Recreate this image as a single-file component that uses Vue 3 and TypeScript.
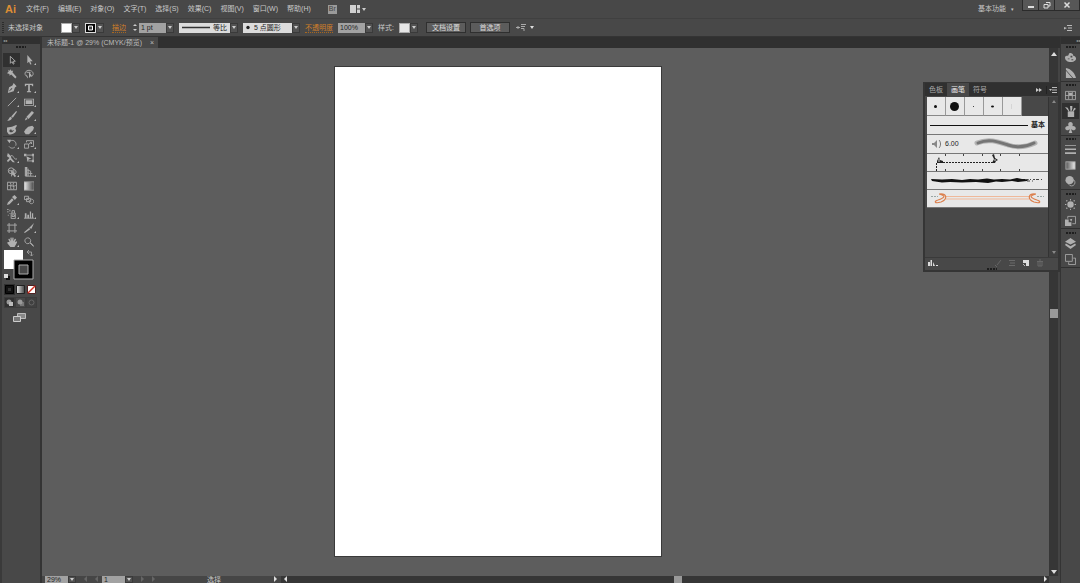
<script setup lang="ts">
import { ref } from 'vue'

interface Icon {
  name: string
  f?: string
  s?: string
  sub?: boolean
}

const menus: string[] = ['文件(F)', '编辑(E)', '对象(O)', '文字(T)', '选择(S)', '效果(C)', '视图(V)', '窗口(W)', '帮助(H)']

const tools: Icon[] = [
  { name: '选择', s: 'M4 1.500V10L6 8L7.500 11L8.500 10.500L7.500 7.500H10Z' },
  { name: '直接选择', f: 'M4 0V10L6 8L7.500 11.500L9 11L7.500 7.500H10.500Z', sub: true },
  { name: '魔棒', f: 'M4 0L5 2L7.500 2L6.500 4L11.500 9.500L10 11.500L5 6.500L3 8L3 6L0 5L2 3L1.500 1L3.500 2Z' },
  { name: '套索', s: 'M4 9C0 8 0 2 6 1.500C12 2 12 8 9 8.500M3 4H8M3 7C3 9 5 9 4 11', f: 'M6 3V11L7.500 9L10 9Z' },
  { name: '钢笔', f: 'M8 0L11.500 4L9.500 5.500L8 10L1 12L2.500 5L6.500 3ZM3 10L6.500 7L5.500 6L2.500 9.500Z', sub: true },
  { name: '文字', f: 'M1 1H11V4H10L9 2.500H7V9.500L8.500 10V11H3.500V10L5 9.500V2.500H3L2 4H1Z', sub: true },
  { name: '直线段', s: 'M1 11L11 1', sub: true },
  { name: '矩形', f: 'M0 2H12V10.500H0ZM1 3V9.500H11V3Z M2 4H10V8.500H2Z', sub: true },
  { name: '画笔', f: 'M11 0L12 1L7 8L5 6.500ZM4.500 7L6 8.500C5 11 3 12 0 11.500C2.500 10.500 2 8 4.500 7Z' },
  { name: '铅笔', f: 'M9.500 0L12 2L5.500 9.500L3 7ZM2.500 7.500L4.500 9.500L1 11.500Z', sub: true },
  { name: '斑点画笔', f: 'M0 3L6 2L11 0L12 1L10 4L11 7C10 10 6 12 2 11L0 8ZM3 6L3 8C5 10 8 8 8.500 6L6 7L5 5Z' },
  { name: '橡皮擦', f: 'M5 2L10 1L12 3L11 6L6 11L2 11L0 8L2 5Z', sub: true },
  { name: '旋转', s: 'M4 2.500C8 0 12 4 10.500 8M9.500 9.500C7 12 4 11 2.500 9', f: 'M0 1L5 1L3 5Z', sub: true },
  { name: '比例缩放', s: 'M.500 6H5.500V11H.500ZM3 4V2H11.500V9H8M6 6L9 4M7 4H9V6', sub: true },
  { name: '宽度', f: 'M1 0L5 4L5 6L9.500 11L7 11L4 8L1 11L0 9L3 6L0 4Z', s: 'M5 3C8 2 8 9 12 7', sub: true },
  { name: '自由变换', s: 'M3 2.500H11V9.500H3.500', f: 'M0 1H3V4H0ZM3 4L9 7L6 7.500L4 10ZM9.500 1H12V4H9.500ZM9.500 8H12V11H9.500Z' },
  { name: '形状生成器', s: 'M5 1A3.500 3.500 0 1 0 5 8A3.500 3.500 0 1 0 5 1M2 4.500H8M7 3A3 3 0 0 1 10 8', f: 'M5 4V12L7 9L9 12L11 11L9 8H11Z', sub: true },
  { name: '透视网格', s: 'M2 0V11H12M5 2V11M2 3L8 5M2 7L10 8M8 5V11', f: 'M1 0H4V11H1Z', sub: true },
  { name: '网格', s: 'M.500 1.500H11.500V10.500H.500ZM1 6C4 4 8 8 11 5M4 2C6 5 3 7 5 10M8 2C6 5 9 7 8 10' },
  { name: '渐变', f: '' },
  { name: '吸管', f: 'M9 0L12 3L9.500 6L6 2.500ZM6 4L8 6L3 11L0 12L1 9Z', sub: true },
  { name: '混合', s: 'M.500 1.500H5.500V5.500H.500ZM3 4H8V8H3ZM9 5A2.700 2.700 0 1 1 8.900 5' },
  { name: '符号喷枪', s: 'M5 5H10V11.500H5ZM6 5V2H9V5M6 7H9V9H6Z', f: 'M0 0H2V1H0ZM3 1H4V3H3ZM0 3H2V4H0ZM3 5H4V6H3ZM1 7H2V8H1Z', sub: true },
  { name: '柱形图', s: 'M0 11H12', f: 'M1 5H3V11H1ZM4 7H6V11H4ZM7 3H8.500V11H7ZM9.500 5H11V11H9.500Z', sub: true },
  { name: '画板', s: 'M2.500 0V12M9.500 0V12M0 2.500H12M0 9.500H12' },
  { name: '切片', f: 'M12 0L9 7L6 6ZM6 6L7.500 7.500L1 12L0 11Z', sub: true },
  { name: '抓手', f: 'M3 6L1.500 2.500L3 2L4.500 5L4 1L5.500 .500L6 4.500L6.500 .500L8 1L7.500 5L9.500 2L11 2.500L9.500 6L12 5L12 6.500L9 12H4L0 7L1.500 6Z', sub: true },
  { name: '缩放', s: 'M4.500 1A3.500 3.500 0 1 0 4.600 1M7 7L11.500 11.500M7.500 6.500L11.500 10.500' },
]

const dock: Icon[][] = [
  [
    { name: '颜色', f: 'M0 6C0 3 4 5 4 3C4 0 9 1 9 4C12 4 14 9 9 10.500C5 12 0 10 0 6ZM3 7V8H5V7ZM6 4V6H8V4ZM7 8V9H9V8Z' },
    { name: '颜色参考', f: 'M1 0C7 1 11 6 12 11H9L1 2ZM1 3L8 11H1Z' },
  ],
  [
    { name: '色板', s: 'M.500 1.500H11.500V10.500H.500ZM4 2V10M8 2V10M0 6H12', f: 'M4 3H8V6H4Z' },
    { name: '画笔', f: 'M3 6H10V12H3ZM0 1L3 2L5 6H4ZM5.500 0H8V3L7 6H6ZM10 2L12 3L9 6H8Z' },
    { name: '符号', f: 'M6 0C8.500 0 9 3 8 4.500C12 4 13 8 10 9C8 9 7 8 6.500 7.500L8 12H4L5.500 7.500C5 8 4 9 2 9C-1 8 0 4 4 4.500C3 3 3.500 0 6 0Z' },
  ],
  [
    { name: '描边', f: 'M0 1H12V2H0ZM0 5H12V6.500H0ZM0 9H12V11H0Z' },
    { name: '渐变', f: '' },
    { name: '透明度', f: 'M5 0A4.500 4.500 0 1 0 5 9A4.500 4.500 0 0 0 5 0Z', s: 'M8 3.500A3.700 3.700 0 1 1 4 9' },
  ],
  [
    { name: '外观', f: 'M6 2.500A3.500 3.500 0 1 0 6 9.500A3.500 3.500 0 1 0 6 2.500ZM5.500 0H6.500V1.500H5.500ZM5.500 10.500H6.500V12H5.500ZM0 5.500H1.500V6.500H0ZM10.500 5.500H12V6.500H10.500ZM1 2L2 1L3 2L2 3ZM9 2L10 1L11 2L10 3ZM1 10L2 9L3 10L2 11ZM9 10L10 9L11 10L10 11Z' },
    { name: '图形样式', s: 'M3 4V1.500H11.500V9.500H8', f: 'M0 5H4V8H7V12H0ZM5 5L8 4L7 7Z' },
  ],
  [
    { name: '图层', f: 'M6 0L12 4L6 7L0 4ZM1 6L6 9L11 6L12 7.500L6 12L0 7.500Z' },
    { name: '画板', s: 'M.500 .500H8V8H.500ZM4 9V11.500H11.500V4.500H9' },
  ],
]

const brushTips: number[] = [3, 9, 1, 3, 0]
const panelTabs: string[] = ['色板', '画笔', '符号']
const activeTab = ref('画笔')
const activeTool = ref('选择')
const strokeWeight = ref('1 pt')
const opacity = ref('100%')
const zoomLevel = ref('29%')
const artboardNo = ref('1')
</script>

<template>
  <div class="app">
    <svg class="defs" width="0" height="0" aria-hidden="true">
      <defs>
        <linearGradient id="ramp"><stop offset="0" stop-color="#555" /><stop offset="1" stop-color="#eee" /></linearGradient>
        <linearGradient id="ramp-back"><stop offset="0" stop-color="#eee" /><stop offset="1" stop-color="#444" /></linearGradient>
      </defs>
    </svg>

    <header class="menubar">
      <span class="logo">Ai</span>
      <nav class="menus">
        <button v-for="m in menus" :key="m" class="menu">{{ m }}</button>
      </nav>
      <button class="bridge" aria-label="Bridge">Br</button>
      <button class="arrange" aria-label="排列文档">
        <svg width="16" height="9" viewBox="0 0 16 9"><path d="M0 0H6V8H0ZM7 0H10V3.500H7ZM7 4.500H10V8H7Z" fill="#d0d0d0" /><path d="M12 3H16L14 6Z" fill="#ccc" /></svg>
      </button>
      <button class="workspace">基本功能 <span class="tiny">▾</span></button>
      <div class="window-buttons">
        <button aria-label="最小化"><svg width="8" height="8" viewBox="0 0 8 8"><path d="M1 5H7V7H1Z" fill="#ddd" /></svg></button>
        <button aria-label="还原"><svg width="8" height="8" viewBox="0 0 8 8"><path d="M3 1.500H7V5H5M1 3.500H5V7H1Z" fill="none" stroke="#ddd" /></svg></button>
        <button class="close" aria-label="关闭"><svg width="8" height="8" viewBox="0 0 8 8"><path d="M1.500 1.500L6.500 6.500M6.500 1.500L1.500 6.500" stroke="#ddd" stroke-width="1.500" /></svg></button>
      </div>
    </header>

    <section class="controls" aria-label="控制">
      <i class="handle"></i>
      <span class="selection">未选择对象</span>
      <div class="combo"><button class="swatch" aria-label="填色"></button><button class="drop" aria-label="填色选项"></button></div>
      <div class="combo">
        <button class="swatch hollow" aria-label="描边颜色"><svg width="11" height="10" viewBox="0 0 11 10"><path d="M.500 .500H10.500V9.500H.500Z" fill="#050505" stroke="#ddd" /><path d="M3.500 3H7.500V7H3.500Z" fill="#444" stroke="#fff" /></svg></button>
        <button class="drop" aria-label="描边选项"></button>
      </div>
      <label class="hot stroke-label" for="weight">描边</label>
      <div class="combo">
        <button class="stepper" aria-label="增减"><svg width="6" height="9" viewBox="0 0 6 9"><path d="M1 3L3 1L5 3ZM1 6L3 8L5 6Z" fill="#ccc" /></svg></button>
        <input id="weight" v-model="strokeWeight" class="field" />
        <button class="drop" aria-label="粗细"></button>
      </div>
      <div class="combo light">
        <svg width="31" height="9" viewBox="0 0 31 9"><path d="M3 4.500H31" stroke="#333" stroke-width="1.500" /></svg>
        <select class="profile" aria-label="宽度配置文件"><option>等比</option></select><span class="drop"></span>
      </div>
      <div class="combo light">
        <svg width="11" height="9" viewBox="0 0 11 9"><circle cx="5" cy="4.500" r="1.700" fill="#222" /></svg>
        <select class="brush" aria-label="画笔定义"><option>5 点圆形</option></select><span class="drop"></span>
      </div>
      <label class="hot" for="opacity">不透明度</label>
      <div class="combo"><input id="opacity" v-model="opacity" class="field" /><button class="drop" aria-label="不透明度选项"></button></div>
      <span>样式:</span>
      <div class="combo"><button class="swatch style" aria-label="样式"></button><button class="drop" aria-label="样式选项"></button></div>
      <div class="actions"><button class="push">文档设置</button><button class="push">首选项</button></div>
      <button class="isolate" aria-label="选择类似的对象"><svg width="18" height="9" viewBox="0 0 18 9"><path d="M0 4.500H4M5 1.500H10M5 3.500H9M5 5.500H8V8M2 3V6" stroke="#aaa" fill="none" /><path d="M14 3H18L16 6Z" fill="#ddd" /></svg></button>
      <button class="flyout" aria-label="面板菜单"><svg width="8" height="8" viewBox="0 0 8 8"><path d="M0 3L3 4L0 5.500ZM3 1H8V2H3ZM4 3.500H8V4.500H4ZM3 6H8V7H3Z" fill="#bbb" /></svg></button>
    </section>

    <div class="body">
      <aside class="toolbar">
        <div class="collapse">◂◂</div>
        <div class="grip"></div>
        <div class="tools">
          <button v-for="t in tools" :key="t.name" :class="['tool', { active: t.name === activeTool }]" :aria-label="t.name" @click="activeTool = t.name">
            <svg viewBox="0 0 12 12" width="10" height="10">
              <path v-if="t.f" :d="t.f" fill="#b0b0b0" fill-rule="evenodd" />
              <path v-if="t.s" :d="t.s" fill="none" stroke="#a4a4a4" stroke-width="1.200" />
              <rect v-if="t.f === ''" x="0" y="1" width="12" height="10" fill="url(#ramp-back)" stroke="#999" />
            </svg>
            <i v-if="t.sub" class="corner"></i>
          </button>
        </div>
        <svg class="paint" width="32" height="32" viewBox="0 0 32 32" role="img" aria-label="填色和描边">
          <path d="M1 1H20V20H1Z" fill="#fff" />
          <path d="M11 11H30V30H11Z" fill="#000" stroke="#aaa" />
          <path d="M16 16H25V25H16Z" fill="#484848" stroke="#aaa" />
          <path d="M25 3H28.500V7M26 1L24 3L26 5M27 5.500L28.500 7L30 5.500" fill="none" stroke="#999" />
          <path d="M3 27H7V31H3Z" fill="#111" /><path d="M1 25H5V29H1Z" fill="#ddd" />
        </svg>
        <div class="modes">
          <button class="mode on" aria-label="颜色"><svg width="9" height="9" viewBox="0 0 9 9"><path d="M.500 .500H8.500V8.500H.500Z" fill="#111" stroke="#000" /><path d="M3 3H6V6H3Z" fill="#333" /></svg></button>
          <button class="mode" aria-label="渐变"><svg width="9" height="9" viewBox="0 0 9 9"><path d="M.500 .500H8.500V8.500H.500Z" fill="url(#ramp-back)" stroke="#222" /></svg></button>
          <button class="mode" aria-label="无"><svg width="9" height="9" viewBox="0 0 9 9"><path d="M.500 .500H8.500V8.500H.500Z" fill="#fff" stroke="#512222" /><path d="M1 8L8 1" stroke="#d33022" stroke-width="1.500" /></svg></button>
        </div>
        <div class="modes draw">
          <button class="mode on" aria-label="正常绘图"><svg width="9" height="9" viewBox="0 0 9 9"><circle cx="4" cy="4" r="2.500" fill="#999" /><path d="M4 4H8V8H4Z" fill="#bbb" /></svg></button>
          <button class="mode" aria-label="背面绘图"><svg width="9" height="9" viewBox="0 0 9 9"><path d="M4 4H8V8H4Z" fill="#777" /><circle cx="4" cy="4" r="2.500" fill="#999" /></svg></button>
          <button class="mode dim" aria-label="内部绘图"><svg width="9" height="9" viewBox="0 0 9 9"><circle cx="4.500" cy="4.500" r="2.500" fill="none" stroke="#666" /></svg></button>
        </div>
        <button class="screen" aria-label="更改屏幕模式"><svg width="13" height="11" viewBox="0 0 13 11"><path d="M4.500 1.500H12.500V6.500H4.500Z" fill="#888" stroke="#bbb" /><path d="M.500 4.500H7.500V9.500H.500Z" fill="#777" stroke="#ccc" /></svg></button>
      </aside>

      <main class="document">
        <div class="tabs">
          <div class="tab"><span>未标题-1 @ 29% (CMYK/预览)</span><button class="tab-close" aria-label="关闭文档">×</button></div>
        </div>
        <div class="view">
          <div class="canvas"><div class="artboard"></div></div>
          <div class="vscroll"><i class="up"></i><i class="thumb"></i><i class="down"></i></div>
        </div>
        <footer class="status">
          <input v-model="zoomLevel" class="field" aria-label="缩放" /><button class="drop" aria-label="缩放选项"></button>
          <div class="step"><i class="left"></i><i class="left"></i></div>
          <input v-model="artboardNo" class="field" aria-label="画板编号" /><button class="drop" aria-label="画板选项"></button>
          <div class="step"><i class="right"></i><i class="right"></i></div>
          <span class="state">选择</span><i class="right bright"></i>
          <div class="hscroll"><i class="left bright"></i><i class="thumb"></i><i class="right bright"></i></div>
        </footer>
      </main>

      <aside class="dock">
        <div class="collapse">◂◂</div>
        <div v-for="(group, g) in dock" :key="g" class="group">
          <div class="grip"></div>
          <button v-for="d in group" :key="d.name" :class="['dock-item', { active: d.name === activeTab }]" :aria-label="d.name">
            <svg viewBox="0 0 12 12" width="11" height="11">
              <path v-if="d.f" :d="d.f" fill="#b0b0b0" fill-rule="evenodd" />
              <path v-if="d.s" :d="d.s" fill="none" stroke="#a4a4a4" />
              <rect v-if="d.f === ''" x="1" y="2" width="10" height="8" fill="url(#ramp)" stroke="#aaa" />
            </svg>
          </button>
        </div>
      </aside>

      <section class="panel" aria-label="画笔面板">
        <div class="panel-tabs">
          <button v-for="p in panelTabs" :key="p" :class="['panel-tab', { active: p === activeTab }]" @click="activeTab = p">{{ p }}</button>
          <button class="panel-menu" aria-label="面板选项"><svg width="22" height="8" viewBox="0 0 22 8"><path d="M0 2L3 4L0 6ZM3 2L6 4L3 6Z" fill="#ccc" /><path d="M10.500 0V8" stroke="#222" /><path d="M13 3H16L14.500 5ZM16 1H21V2H16ZM16 3.500H21V4.500H16ZM16 6H21V7H16Z" fill="#bbb" /></svg></button>
        </div>
        <div class="panel-body">
          <div class="brushes">
            <div class="tips">
              <div v-for="(tip, i) in brushTips" :key="i" class="tip"><svg width="17" height="17" viewBox="0 0 17 17"><ellipse cx="8.500" cy="8.500" :rx="tip / 2" :ry="i === 3 ? 1 : tip / 2" fill="#111" /><path v-if="i === 4" d="M8.500 6V11" stroke="#d5d5d5" /></svg></div>
            </div>
            <div class="row basic"><i class="rule"></i><span>基本</span></div>
            <div class="row size">
              <svg width="10" height="10" viewBox="0 0 10 10"><path d="M0 4H2L5 1V9L2 6H0Z" fill="#888" /><path d="M7 1C9 3 9 7 7 9" fill="none" stroke="#777" /></svg>
              <span>6.00</span>
              <svg class="wave" width="64" height="14" viewBox="0 0 64 14"><path d="M3 6C15 1 25 5 34 8C43 11 52 10 61 6" fill="none" stroke="#b4b4b4" stroke-width="5" stroke-linecap="round" /><path d="M4 6C15 1 25 5 34 8C43 11 52 10 60 6" fill="none" stroke="#757575" stroke-width="3" stroke-linecap="round" /></svg>
            </div>
            <div class="row">
              <svg width="121" height="17" viewBox="0 0 121 17"><path d="M9.500 17V8.500H67" fill="none" stroke="#222" stroke-dasharray="2 1" /><path d="M10 7L12 3L13 6L16 7L16 9H10ZM65 1L67 0L68 4L71 6L69 7L68 9H65L67 5Z" fill="#222" /><path d="M18.500 0V2M36.500 0V2M55.500 0V2M73.500 0V2M92.500 0V2M18.500 15V17M36.500 15V17M55.500 15V17M73.500 15V17M92.500 15V17" stroke="#444" /><path d="M12 5V8M68 5V7" stroke="#ddd" /></svg>
            </div>
            <div class="row">
              <svg width="121" height="17" viewBox="0 0 121 17"><path d="M4 7L15 7.500L25 7L35 8L43 7L51 7.500L60 6.500L67 7.500L75 7L83 7.500L90 6L95 7L102 7L100 9L91 10L85 9L75 10L69 9.500L61 11L49 10L35 10.500L23 10L15 10.500L5 9Z" fill="#111" /><path d="M98 7.500H115M100 9H108" stroke="#444" stroke-dasharray="3 2 1 2 2 1" /></svg>
            </div>
            <div class="row">
              <svg width="121" height="17" viewBox="0 0 121 17"><path d="M19 6.500H102M19 9H102" stroke="#efb899" /><path d="M12 4C20 3 21 9 14 12C7 14 7 11 11 10C17 8 20 6 12 4M109 4C101 3 100 9 107 12C114 14 114 11 110 10C104 8 101 6 109 4" fill="none" stroke="#dc814f" stroke-width="1.200" /><path d="M4 6.500H11M110 6.500H117" stroke="#9aa6a4" stroke-dasharray="2 1" /></svg>
            </div>
          </div>
          <div class="panel-scroll"><i class="up"></i><i class="down"></i></div>
        </div>
        <div class="panel-foot">
          <button aria-label="画笔库"><svg width="10" height="8" viewBox="0 0 10 8"><path d="M0 3H2V7H0ZM2.500 1H4V7H2.500ZM5 3L7 7H5ZM8 6H10V7H8Z" fill="#ddd" /></svg></button>
          <span class="fill"></span>
          <button aria-label="移去画笔描边" disabled><svg width="8" height="8" viewBox="0 0 8 8"><path d="M7 1L3 6M1 6L3 8" stroke="#666" /></svg></button>
          <button aria-label="画笔选项" disabled><svg width="8" height="8" viewBox="0 0 8 8"><path d="M1 1.500H7M2 4H7M1 6.500H7" stroke="#6a6a6a" /></svg></button>
          <button aria-label="新建画笔"><svg width="8" height="8" viewBox="0 0 8 8"><path d="M1 1H7V7H4V4H1Z" fill="#ddd" /><path d="M1 5L3 7" stroke="#bbb" /></svg></button>
          <button aria-label="删除画笔" disabled><svg width="8" height="8" viewBox="0 0 8 8"><path d="M1 2.500H7M2 3V7H6V3M3 1H5M4 3V7" fill="none" stroke="#666" /></svg></button>
        </div>
        <div class="grip bottom"></div>
      </section>
    </div>
  </div>
</template>

<style>
body { margin: 0; background: #5d5d5d; }
</style>

<style scoped>
.app {
  display: flex;
  flex-direction: column;
  height: 100vh;
  overflow: hidden;
  background: #484848;
  color: #c8c8c8;
  font: 7px/10px "Liberation Sans", "Noto Sans CJK SC", sans-serif;
}
.app * { box-sizing: border-box; }
.defs { position: absolute; }
button, input, select { margin: 0; padding: 0; border: 0; border-radius: 0; background: none; color: inherit; font: inherit; }
button { display: flex; align-items: center; justify-content: center; white-space: nowrap; }
svg { display: block; flex: none; }

.menubar { display: flex; align-items: center; height: 18px; flex: none; padding-left: 5px; }
.logo { width: 21px; color: #dc8d35; font-size: 11px; font-weight: bold; line-height: 16px; }
.menus { display: flex; gap: 9px; }
.bridge { width: 9px; height: 9px; margin-left: 17px; background: #9a9a9a; color: #444; }
.arrange { margin-left: 13px; }
.workspace { gap: 5px; margin-left: auto; margin-right: 8px; }
.tiny { font-size: 5px; }
.window-buttons { display: flex; align-self: flex-start; height: 11px; border: 1px solid #2b2b2b; border-top: 0; }
.window-buttons button { width: 16px; background: #575757; border-right: 1px solid #2b2b2b; }
.window-buttons .close { width: 24px; border-right: 0; }

.controls { display: flex; align-items: center; gap: 5px; height: 19px; flex: none; padding: 0 8px 0 2px; border-top: 1px solid #404040; border-bottom: 1px solid #343434; }
.handle { width: 2px; height: 12px; margin-right: -1px; background: repeating-linear-gradient(#2c2c2c 0 1px, #484848 1px 2px); }
.selection { width: 48px; }
.combo { display: flex; align-items: center; height: 10px; }
.combo.light { background: #dcdcdc; color: #222; }
.swatch { width: 11px; height: 10px; border: 1px solid #aaa; background: #fff; }
.swatch.hollow { border: 0; }
.swatch.style { background: #e6e6e6; }
.drop { display: flex; align-items: center; justify-content: center; width: 8px; height: 10px; flex: none; background: #525252; border: 1px solid #3a3a3a; }
.drop::after { content: ""; border: 2px solid transparent; border-top: 3px solid #ccc; border-bottom: 0; }
.hot { color: #d07f28; border-bottom: 1px dotted #a8671f; line-height: 9px; }
.stroke-label { margin-left: 3px; }
.stepper { width: 8px; height: 10px; }
.field { width: 27px; height: 10px; padding: 0 2px; background: #a2a2a2; color: #222; }
select { height: 10px; appearance: none; outline: 0; }
.profile { width: 20px; padding-left: 3px; }
.brush { width: 38px; }
.actions { display: flex; gap: 4px; margin-left: 3px; }
.push { width: 40px; height: 11px; border: 1px solid #2f2f2f; background: #5c5c5c; color: #ddd; }
.isolate { margin-left: 1px; }
.flyout { margin-left: auto; }

.body { position: relative; display: flex; flex: 1; min-height: 0; }
.toolbar { width: 42px; flex: none; border-left: 2px solid #3a3a3a; border-right: 2px solid #343434; }
.collapse { height: 7px; padding-left: 1px; background: #303030; color: #aaa; font-size: 4px; line-height: 7px; }
.grip { height: 2px; width: 10px; margin: 2px auto; background: repeating-linear-gradient(90deg, #1e1e1e 0 2px, #444 2px 3px); }
.tools { display: grid; grid-template-columns: 17px 17px; grid-auto-rows: 14px; padding: 3px 0 0 1px; }
.tool { position: relative; }
.tool.active { background: #303030; }
.tool:nth-child(11), .tool:nth-child(12) { border-bottom: 1px solid #363636; }
.corner { position: absolute; right: 1px; bottom: 2px; border: 1px solid #bbb; border-top-color: transparent; border-left-color: transparent; }
.paint { margin: 0 0 0 1px; }
.modes { display: flex; height: 11px; margin: 3px 0 0 2px; }
.modes.draw { margin-top: 2px; }
.mode { width: 11px; height: 11px; }
.mode.on { background: #303030; }
.mode.dim { background: #404040; }
.draw .mode { border: 1px solid #3c3c3c; }
.screen { margin: 4px 0 0 11px; }

.document { display: flex; flex-direction: column; flex: 1; min-width: 0; }
.tabs { display: flex; height: 11px; flex: none; background: #303030; }
.tab { display: flex; align-items: center; gap: 8px; padding: 0 4px 0 5px; background: #484848; color: #bcbcbc; }
.view { display: flex; flex: 1; min-height: 0; }
.canvas { position: relative; flex: 1; background: #5d5d5d; }
.artboard { position: absolute; left: 292px; top: 18px; width: 328px; height: 491px; background: #fff; border: 1px solid #3a3a3a; }
.vscroll { display: flex; flex-direction: column; align-items: center; justify-content: space-between; width: 11px; padding: 4px 0 2px; background: #363636; border-right: 2px solid #444; }
.thumb { width: 8px; height: 9px; background: #999; }
.up, .down, .left, .right { border: 3px solid transparent; }
.up { border-top: 0; border-bottom: 4px solid #ddd; }
.down { border-bottom: 0; border-top: 4px solid #ddd; }
.left { border-left: 0; border-right-color: #666; }
.right { border-right: 0; border-left-color: #666; }
.left.bright { border-right-color: #ddd; }
.right.bright { border-left-color: #ddd; }
.status { display: flex; align-items: flex-start; height: 7px; flex: none; overflow: hidden; padding-left: 3px; background: #464646; line-height: 7px; }
.status .field { width: 23px; height: 7px; }
.status .drop { height: 7px; }
.step { display: flex; gap: 8px; width: 26px; padding-left: 8px; }
.status .step ~ .step { width: 22px; }
.state { flex: none; width: 119px; padding-left: 52px; }
.hscroll { display: flex; flex: 1; height: 7px; align-items: flex-start; justify-content: space-between; margin: 0 11px 0 4px; padding: 0 2px 0 3px; background: #363636; }
.hscroll .thumb { margin-left: 24px; }

.dock { width: 20px; flex: none; border-left: 1px solid #343434; }
.dock .collapse { text-align: right; }
.group { display: flex; flex-direction: column; align-items: center; padding-top: 1px; border-bottom: 1px solid #303030; }
.group:nth-child(n + 5) { padding-top: 2px; }
.group .grip { margin: 1px 0; }
.dock-item { width: 17px; height: 16px; }
.dock-item.active { background: #303030; }

.panel { position: absolute; top: 45px; right: 20px; width: 137px; border: 2px solid #353535; border-top-width: 1px; background: #484848; }
.panel-tabs { display: flex; height: 13px; background: #303030; color: #aaa; }
.panel-tab { width: 22px; }
.panel-tab.active { background: #484848; color: #eee; }
.panel-menu { margin-left: auto; }
.panel-body { display: flex; height: 161px; padding: 1px 0 0 2px; }
.brushes { flex: 1; display: grid; grid-template-rows: repeat(3, 19px) repeat(3, 18px); align-content: start; color: #222; }
.tips { display: flex; }
.tip { padding: 1px 0 0; width: 19px; background: #e8e8e8; border-right: 1px solid #999; border-bottom: 1px solid #888; }
.row { display: flex; align-items: center; background: #e8e8e8; border-bottom: 1px solid #777; overflow: hidden; }
.basic { gap: 3px; padding: 0 3px; font-weight: bold; }
.rule { flex: 1; height: 1px; background: #111; }
.size { gap: 3px; padding: 0 10px 0 5px; }
.wave { margin-left: auto; }
.panel-scroll { display: flex; flex-direction: column; align-items: center; justify-content: space-between; width: 10px; padding: 3px 0; background: #404040; border-left: 1px solid #333; }
.panel-scroll .up { border-width: 0 2px 3px; border-bottom-color: #888; }
.panel-scroll .down { border-width: 3px 2px 0; border-top-color: #888; }
.panel-foot { display: flex; align-items: center; gap: 6px; height: 10px; padding: 0 14px 0 3px; border-top: 1px solid #3a3a3a; }
.fill { flex: 1; }
.grip.bottom { margin: 1px auto 0; }
</style>
